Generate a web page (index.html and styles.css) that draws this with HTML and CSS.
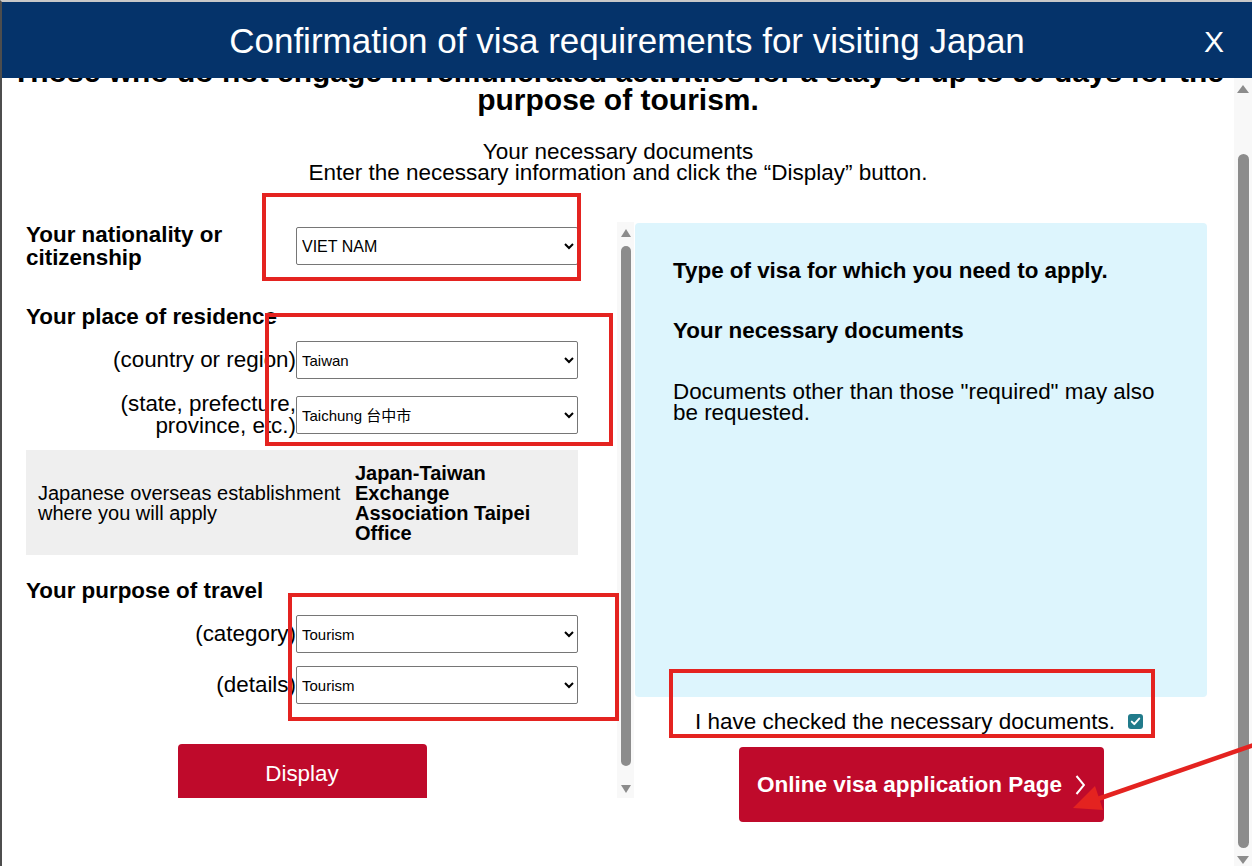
FILE: index.html
```html
<!DOCTYPE html>
<html lang="en">
<head>
<meta charset="utf-8">
<title>Confirmation of visa requirements for visiting Japan</title>
<link rel="stylesheet" href="styles.css">
</head>
<body>
<div class="window">
  <header class="topbar">
    <span></span>
    <h1 class="title">Confirmation of visa requirements for visiting Japan</h1>
    <span class="close">X</span>
  </header>
  <div class="viewport">
    <div class="page-clip">
      <main class="page">
        <h2 class="lead">Those who do not engage in remunerated activities for a stay of up to 90 days for the purpose of tourism.</h2>
        <p class="intro">Your necessary documents<br>Enter the necessary information and click the “Display” button.</p>
        <div class="columns">
          <section class="left-pane">
            <form class="form">
              <div class="row row-nat">
                <label class="label-strong" for="nat">Your nationality or citizenship</label>
                <select id="nat" class="sel sel-lg"><option>VIET NAM</option></select>
              </div>
              <div class="group-title">Your place of residence</div>
              <div class="row row-first">
                <label class="label-sub" for="country">(country or region)</label>
                <select id="country" class="sel"><option>Taiwan</option></select>
              </div>
              <div class="row">
                <label class="label-sub" for="state">(state, prefecture, province, etc.)</label>
                <select id="state" class="sel"><option>Taichung 台中市</option></select>
              </div>
              <div class="office">
                <div class="office-label">Japanese overseas establishment where you will apply</div>
                <div class="office-name">Japan-Taiwan Exchange Association Taipei Office</div>
              </div>
              <div class="group-title group-travel">Your purpose of travel</div>
              <div class="row row-first">
                <label class="label-sub" for="cat">(category)</label>
                <select id="cat" class="sel"><option>Tourism</option></select>
              </div>
              <div class="row row-first">
                <label class="label-sub" for="det">(details)</label>
                <select id="det" class="sel"><option>Tourism</option></select>
              </div>
              <button type="button" class="display-btn">Display</button>
            </form>
            <div class="scrollbar inner">
              <span class="arr-up"></span>
              <span class="thumb"></span>
              <span class="arr-down"></span>
            </div>
          </section>
          <section class="right-pane">
            <div class="result">
              <h3 class="result-title">Type of visa for which you need to apply.</h3>
              <h3 class="result-title second">Your necessary documents</h3>
              <p class="result-note">Documents other than those "required" may also be requested.</p>
            </div>
            <div class="confirm">
              <span>I have checked the necessary documents.</span>
              <span class="check"><svg viewBox="0 0 15 15" width="15" height="15"><polyline points="3.8,7.6 6.3,10.1 11.2,4.6" fill="none" stroke="#fff" stroke-width="2" stroke-linecap="round" stroke-linejoin="round"/></svg></span>
            </div>
            <a class="apply-btn" href="#">
              <span>Online visa application Page</span>
              <svg class="chev" viewBox="0 0 10 20" width="10" height="20"><polyline points="1.5,1 9,10 1.5,19" fill="none" stroke="#fff" stroke-width="2"/></svg>
            </a>
          </section>
        </div>
      </main>
    </div>
    <div class="scrollbar outer">
      <span class="arr-up"></span>
      <span class="thumb"></span>
      <span class="arr-down"></span>
    </div>
  </div>
</div>
<div class="mark mark-1"></div>
<div class="mark mark-2"></div>
<div class="mark mark-3"></div>
<div class="mark mark-4"></div>
<svg class="pointer" width="1252" height="866" viewBox="0 0 1252 866">
  <line x1="1254" y1="745" x2="1092" y2="801" stroke="#e42320" stroke-width="4.5"/>
  <polygon points="1073,808 1095,786 1103,810" fill="#e42320"/>
</svg>
</body>
</html>
```
FILE: styles.css
```css
html, body {
  margin: 0;
  padding: 0;
  height: 100%;
}
body {
  position: relative;
  font-family: "Liberation Sans", Arial, sans-serif;
  color: #000;
  background: #fff;
  overflow: hidden;
}
.window {
  height: 866px;
  box-sizing: border-box;
  border-top: 2px solid #c8c8c8;
  border-left: 2px solid #4d4d4d;
  display: flex;
  flex-direction: column;
}
.topbar {
  height: 76px;
  flex: none;
  background: #05336a;
  color: #fff;
  display: grid;
  grid-template-columns: 1fr auto 1fr;
  align-items: center;
  position: relative;
  z-index: 2;
}
.title {
  margin: 0;
  font-weight: normal;
  font-size: 35px;
  line-height: 40px;
  white-space: nowrap;
  padding-top: 2px;
}
.close {
  justify-self: end;
  font-size: 30px;
  line-height: 34px;
  padding-right: 28px;
  padding-top: 3px;
}
.viewport {
  flex: 1;
  display: flex;
  min-height: 0;
}
.page-clip {
  flex: 1;
  overflow: hidden;
}
.page {
  margin-top: -20px;
}
.lead {
  margin: 0;
  font-size: 30px;
  line-height: 28px;
  font-weight: bold;
  text-align: center;
  padding: 0 8px;
}
.intro {
  margin: 27px 0 0;
  font-size: 22.5px;
  line-height: 21px;
  text-align: center;
}
.columns {
  margin-top: 39px;
  padding-left: 24px;
  display: flex;
  align-items: flex-start;
}
.left-pane {
  width: 608px;
  height: 576px;
  display: flex;
  overflow: hidden;
  flex: none;
}
.form {
  width: 552px;
  flex: none;
  padding-top: 1px;
  margin: 0;
}
.row {
  display: grid;
  grid-template-columns: 270px 282px;
  align-items: center;
  margin-top: 14px;
}
.row-nat {
  margin-top: 0;
}
.row-first {
  margin-top: 13px;
}
.label-strong {
  font-weight: bold;
  font-size: 22.4px;
  line-height: 23px;
}
.label-sub {
  font-size: 22.4px;
  line-height: 22px;
  text-align: right;
  padding-left: 36px;
}
.sel {
  width: 282px;
  height: 38px;
  box-sizing: border-box;
  border: 1px solid #767676;
  border-radius: 2px;
  background: #fff;
  color: #000;
  font-family: "Liberation Sans", Arial, "Noto Sans CJK TC", sans-serif;
  font-size: 15px;
  padding: 0 0 0 1px;
  margin: 0;
}
.sel-lg {
  font-size: 16px;
}
.group-title {
  margin-top: 36px;
  font-weight: bold;
  font-size: 22.4px;
  line-height: 23px;
}
.group-travel {
  margin-top: 24px;
}
.office {
  margin-top: 13px;
  background: #efefef;
  padding: 13px 12px 12px;
  display: grid;
  grid-template-columns: 317px 1fr;
  align-items: center;
  font-size: 20px;
  line-height: 20px;
}
.office-name {
  font-weight: bold;
}
.display-btn {
  display: block;
  margin: 40px auto 0;
  width: 249px;
  height: 60px;
  border: 0;
  border-radius: 4px;
  background: #bf0a2b;
  color: #fff;
  font-family: "Liberation Sans", Arial, sans-serif;
  font-size: 22.4px;
  padding: 0;
}
.scrollbar {
  flex: none;
  display: flex;
  flex-direction: column;
  align-items: center;
  background: #f8f8f8;
}
.scrollbar.inner {
  width: 17px;
  margin-left: 39px;
  height: 576px;
}
.scrollbar.outer {
  width: 18px;
}
.arr-up {
  width: 0;
  height: 0;
  border-left: 5px solid transparent;
  border-right: 5px solid transparent;
  border-bottom: 8px solid #8c8c8c;
}
.arr-down {
  width: 0;
  height: 0;
  border-left: 5px solid transparent;
  border-right: 5px solid transparent;
  border-top: 8px solid #8c8c8c;
}
.thumb {
  background: #8c8c8c;
  border-radius: 6px;
}
.inner .arr-up { margin-top: 7px; }
.inner .thumb { width: 10px; height: 520px; margin-top: 9px; }
.inner .arr-down { margin-top: 19px; }
.outer .arr-up { margin-top: 7px; border-left-width: 6px; border-right-width: 6px; }
.outer .thumb { width: 11px; height: 694px; margin-top: 61px; }
.outer .arr-down { margin-top: 8px; border-left-width: 6px; border-right-width: 6px; }
.right-pane {
  width: 572px;
  margin-left: 1px;
  flex: none;
  padding-top: 1px;
}
.result {
  height: 474px;
  box-sizing: border-box;
  background: #ddf5fd;
  border-radius: 4px;
  padding: 37px 39px 0 38px;
}
.result-title {
  margin: 0;
  font-size: 22.4px;
  line-height: 22px;
  font-weight: bold;
}
.result-title.second {
  margin-top: 38px;
}
.result-note {
  margin: 39px 0 0;
  font-size: 22.4px;
  line-height: 21px;
}
.confirm {
  margin-top: 14px;
  display: flex;
  justify-content: center;
  align-items: center;
  gap: 13px;
  font-size: 22.5px;
  line-height: 22px;
  padding-right: 4px;
}
.check {
  width: 15px;
  height: 15px;
  background: #217b8b;
  border-radius: 3px;
  display: block;
  margin-top: -2px;
}
.check svg { display: block; }
.apply-btn {
  margin: 14px auto 0;
  width: 365px;
  height: 75px;
  background: #bf0a2b;
  border-radius: 4px;
  color: #fff;
  text-decoration: none;
  display: flex;
  justify-content: center;
  align-items: center;
  gap: 13px;
  font-weight: bold;
  font-size: 22.5px;
  padding-left: 0;
  box-sizing: border-box;
}
.chev { display: block; }
.mark {
  position: absolute;
  border: 4px solid #e42320;
  box-sizing: border-box;
  pointer-events: none;
}
.mark-1 { left: 262px; top: 193px; width: 319px; height: 88px; }
.mark-2 { left: 265px; top: 313px; width: 348px; height: 133px; }
.mark-3 { left: 288px; top: 593px; width: 331px; height: 128px; }
.mark-4 { left: 669px; top: 669px; width: 486px; height: 69px; }
.pointer {
  position: absolute;
  left: 0;
  top: 0;
  pointer-events: none;
}
```
